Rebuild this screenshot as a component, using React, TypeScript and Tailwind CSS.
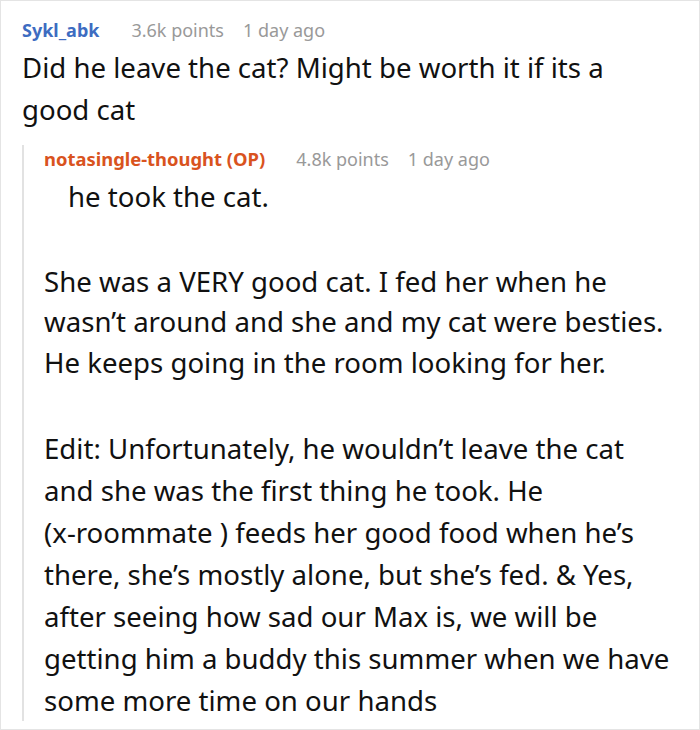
import React from 'react';

const CommentHeader: React.FC<{ user: string; userClass: string; points: string; gapClass: string; ageGapClass: string }> = ({
  user,
  userClass,
  points,
  gapClass,
  ageGapClass,
}) => (
  <div className="flex items-baseline text-[18px] leading-[28px] whitespace-nowrap">
    <span className={`font-bold ${userClass}`}>{user}</span>
    <span className={`${gapClass} text-[#999999]`}>{points}</span>
    <span className={`${ageGapClass} text-[#999999]`}>1 day ago</span>
  </div>
);

export default function App() {
  return (
    <div
      className="w-[700px] h-[730px] bg-white border border-[#e4e4e4] pl-[21px] pt-[15px] overflow-hidden text-[#111111]"
      style={{ fontFamily: '"Noto Sans", "Open Sans", sans-serif' }}
    >
      <CommentHeader
        user="Sykl_abk"
        userClass="text-[#3d6cc1]"
        points="3.6k points"
        gapClass="ml-[32px]"
        ageGapClass="ml-[19px]"
      />
      <p className="mt-[3px] text-[27.6px] leading-[41.6px]">
        Did he leave the cat? Might be worth it if its a<br />
        good cat
      </p>

      <div className="mt-[28px] border-l-2 border-[#e2e2e2] pl-[20px]">
        <div className="-mt-[13px]">
          <CommentHeader
            user="notasingle-thought (OP)"
            userClass="text-[#d9531e] text-[18.4px]"
            points="4.8k points"
            gapClass="ml-[31px]"
            ageGapClass="ml-[19px]"
          />
        </div>
        <p className="mt-[3px] pl-[24px] text-[27.6px] leading-[41.6px]">he took the cat.</p>
        <p className="mt-[43px] text-[27.6px] leading-[40.5px]">
          She was a VERY good cat. I fed her when he<br />
          wasn’t around and she and my cat were besties.<br />
          He keeps going in the room looking for her.
        </p>
        <p className="mt-[45px] -mb-[9px] text-[27.6px] leading-[42px]">
          Edit: Unfortunately, he wouldn’t leave the cat<br />
          and she was the first thing he took. He<br />
          (x-roommate ) feeds her good food when he’s<br />
          there, she’s mostly alone, but she’s fed. &amp; Yes,<br />
          after seeing how sad our Max is, we will be<br />
          getting him a buddy this summer when we have<br />
          some more time on our hands
        </p>
      </div>
    </div>
  );
}
